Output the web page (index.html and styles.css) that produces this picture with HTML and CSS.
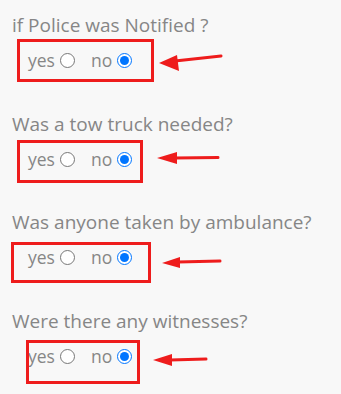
FILE: index.html
```html
<!DOCTYPE html>
<html>
<head>
<meta charset="utf-8">
<link rel="stylesheet" href="styles.css">
</head>
<body>
<div class="form">
  <div class="q">
    <div class="title">if Police was Notified ?</div>
    <div class="opts">
      <label class="opt">yes<input type="radio" name="q1"></label>
      <label class="opt">no<input type="radio" name="q1" checked></label>
    </div>
  </div>
  <div class="q">
    <div class="title">Was a tow truck needed?</div>
    <div class="opts">
      <label class="opt">yes<input type="radio" name="q2"></label>
      <label class="opt">no<input type="radio" name="q2" checked></label>
    </div>
  </div>
  <div class="q">
    <div class="title">Was anyone taken by ambulance?</div>
    <div class="opts">
      <label class="opt">yes<input type="radio" name="q3"></label>
      <label class="opt">no<input type="radio" name="q3" checked></label>
    </div>
  </div>
  <div class="q">
    <div class="title">Were there any witnesses?</div>
    <div class="opts">
      <label class="opt">yes<input type="radio" name="q4"></label>
      <label class="opt">no<input type="radio" name="q4" checked></label>
    </div>
  </div>
</div>
<svg class="marks" width="341" height="394" viewBox="0 0 341 394">
  <g fill="none" stroke="#ee1c1c" stroke-width="3">
    <rect x="18.5" y="40.5" width="134" height="40"/>
    <rect x="18.5" y="141.5" width="123" height="40"/>
    <rect x="12.5" y="243.5" width="137" height="38"/>
    <rect x="27.5" y="341.5" width="111" height="41"/>
  </g>
  <g stroke="#ee1c1c" stroke-width="3" stroke-linecap="round">
    <line x1="175" y1="61" x2="221" y2="56"/>
    <line x1="175" y1="158" x2="218" y2="157.5"/>
    <line x1="178" y1="262" x2="220" y2="261"/>
    <line x1="170" y1="360" x2="206" y2="359"/>
  </g>
  <g fill="#ee1c1c">
    <polygon points="159,63 177,55 179,71"/>
    <polygon points="157,158 177,152 177,164"/>
    <polygon points="162,263 180,257 180,268"/>
    <polygon points="153,360 172,354 172,366"/>
  </g>
</svg>
</body>
</html>
```
FILE: styles.css
```css
html, body {
  margin: 0;
  padding: 0;
  background: #f8f8f8;
}
body {
  position: relative;
  width: 341px;
  height: 394px;
  overflow: hidden;
  font-family: "Open Sans", "Liberation Sans", sans-serif;
  color: #868686;
}
.form {
  display: flex;
  flex-direction: column;
  gap: 38.5px;
  padding: 12px 0 0 12px;
}
.q {
  display: flex;
  flex-direction: column;
  gap: 10px;
}
.title {
  font-size: 19px;
  line-height: 26px;
  white-space: nowrap;
}
.opts {
  display: flex;
  gap: 13px;
  padding-left: 16px;
  font-size: 17.5px;
  line-height: 24px;
}
.opt {
  display: inline-block;
  white-space: nowrap;
}
.opt input {
  margin: 0 3px 0 5px;
  width: 15px;
  height: 15px;
  vertical-align: -1px;
}
.marks {
  position: absolute;
  left: 0;
  top: 0;
  pointer-events: none;
}
```
